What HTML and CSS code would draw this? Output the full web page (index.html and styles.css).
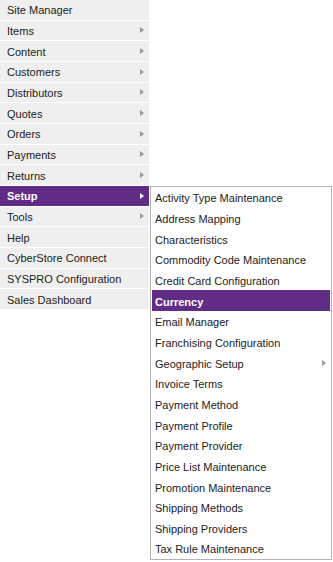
FILE: index.html
```html
<!DOCTYPE html>
<html lang="en">
<head>
    <meta charset="UTF-8">
    <link rel="stylesheet" href="styles.css">
</head>
<body>
<nav class="menubar">
    <ul class="mainmenu">
        <li><span>Site Manager</span></li>
        <li class="hassub"><span>Items</span></li>
        <li class="hassub"><span>Content</span></li>
        <li class="hassub"><span>Customers</span></li>
        <li class="hassub"><span>Distributors</span></li>
        <li class="hassub"><span>Quotes</span></li>
        <li class="hassub"><span>Orders</span></li>
        <li class="hassub"><span>Payments</span></li>
        <li class="hassub"><span>Returns</span></li>
        <li class="hassub active"><span>Setup</span></li>
        <li class="hassub"><span>Tools</span></li>
        <li><span>Help</span></li>
        <li><span>CyberStore Connect</span></li>
        <li><span>SYSPRO Configuration</span></li>
        <li><span>Sales Dashboard</span></li>
    </ul>
    <!-- setup flyout, lined up with the Setup row -->
    <ul class="submenu">
        <li><span>Activity Type Maintenance</span></li>
        <li><span>Address Mapping</span></li>
        <li><span>Characteristics</span></li>
        <li><span>Commodity Code Maintenance</span></li>
        <li><span>Credit Card Configuration</span></li>
        <li class="active"><span>Currency</span></li>
        <li><span>Email Manager</span></li>
        <li><span>Franchising Configuration</span></li>
        <li class="hassub"><span>Geographic Setup</span></li>
        <li><span>Invoice Terms</span></li>
        <li><span>Payment Method</span></li>
        <li><span>Payment Profile</span></li>
        <li><span>Payment Provider</span></li>
        <li><span>Price List Maintenance</span></li>
        <li><span>Promotion Maintenance</span></li>
        <li><span>Shipping Methods</span></li>
        <li><span>Shipping Providers</span></li>
        <li><span>Tax Rule Maintenance</span></li>
    </ul>
</nav>
</body>
</html>
```

FILE: styles.css
```css
* {
    margin: 0;
    padding: 0;
    box-sizing: border-box;
}

body {
    background: #fff;
    font-family: "Liberation Sans", Arial, sans-serif;
    font-size: 11px;
    color: #222;
}

ul li {
    list-style: none;
}

.menubar {
    display: flex;
    align-items: flex-start;
}

.mainmenu {
    width: 150px;
    padding-right: 1px;
}

.mainmenu li {
    position: relative;
    height: 20.67px;
    display: flex;
    align-items: center;
    padding: 1px 0 0 7px;
    background: #efefef;
    border-bottom: 1px solid #fff;
}

.mainmenu li.active {
    background: #612c86;
    color: #fff;
    font-weight: bold;
}

/* little arrow for items with a flyout */
.hassub::after {
    content: "";
    position: absolute;
    right: 5px;
    top: 50%;
    margin-top: -3px;
    border-left: 4px solid #999;
    border-top: 3px solid transparent;
    border-bottom: 3px solid transparent;
}

.mainmenu li.active::after {
    border-left-color: #fff;
}

.submenu {
    width: 182px;
    margin-top: 186px;
    padding: 0 1px;
    background: #fff;
    border: 1px solid #b3b3b3;
}

.submenu li {
    position: relative;
    height: 20.67px;
    display: flex;
    align-items: center;
    padding: 2px 0 0 3px;
}

.submenu li.active {
    background: #612c86;
    color: #fff;
    font-weight: bold;
}

.submenu li.hassub::after {
    right: 4px;
}
```
